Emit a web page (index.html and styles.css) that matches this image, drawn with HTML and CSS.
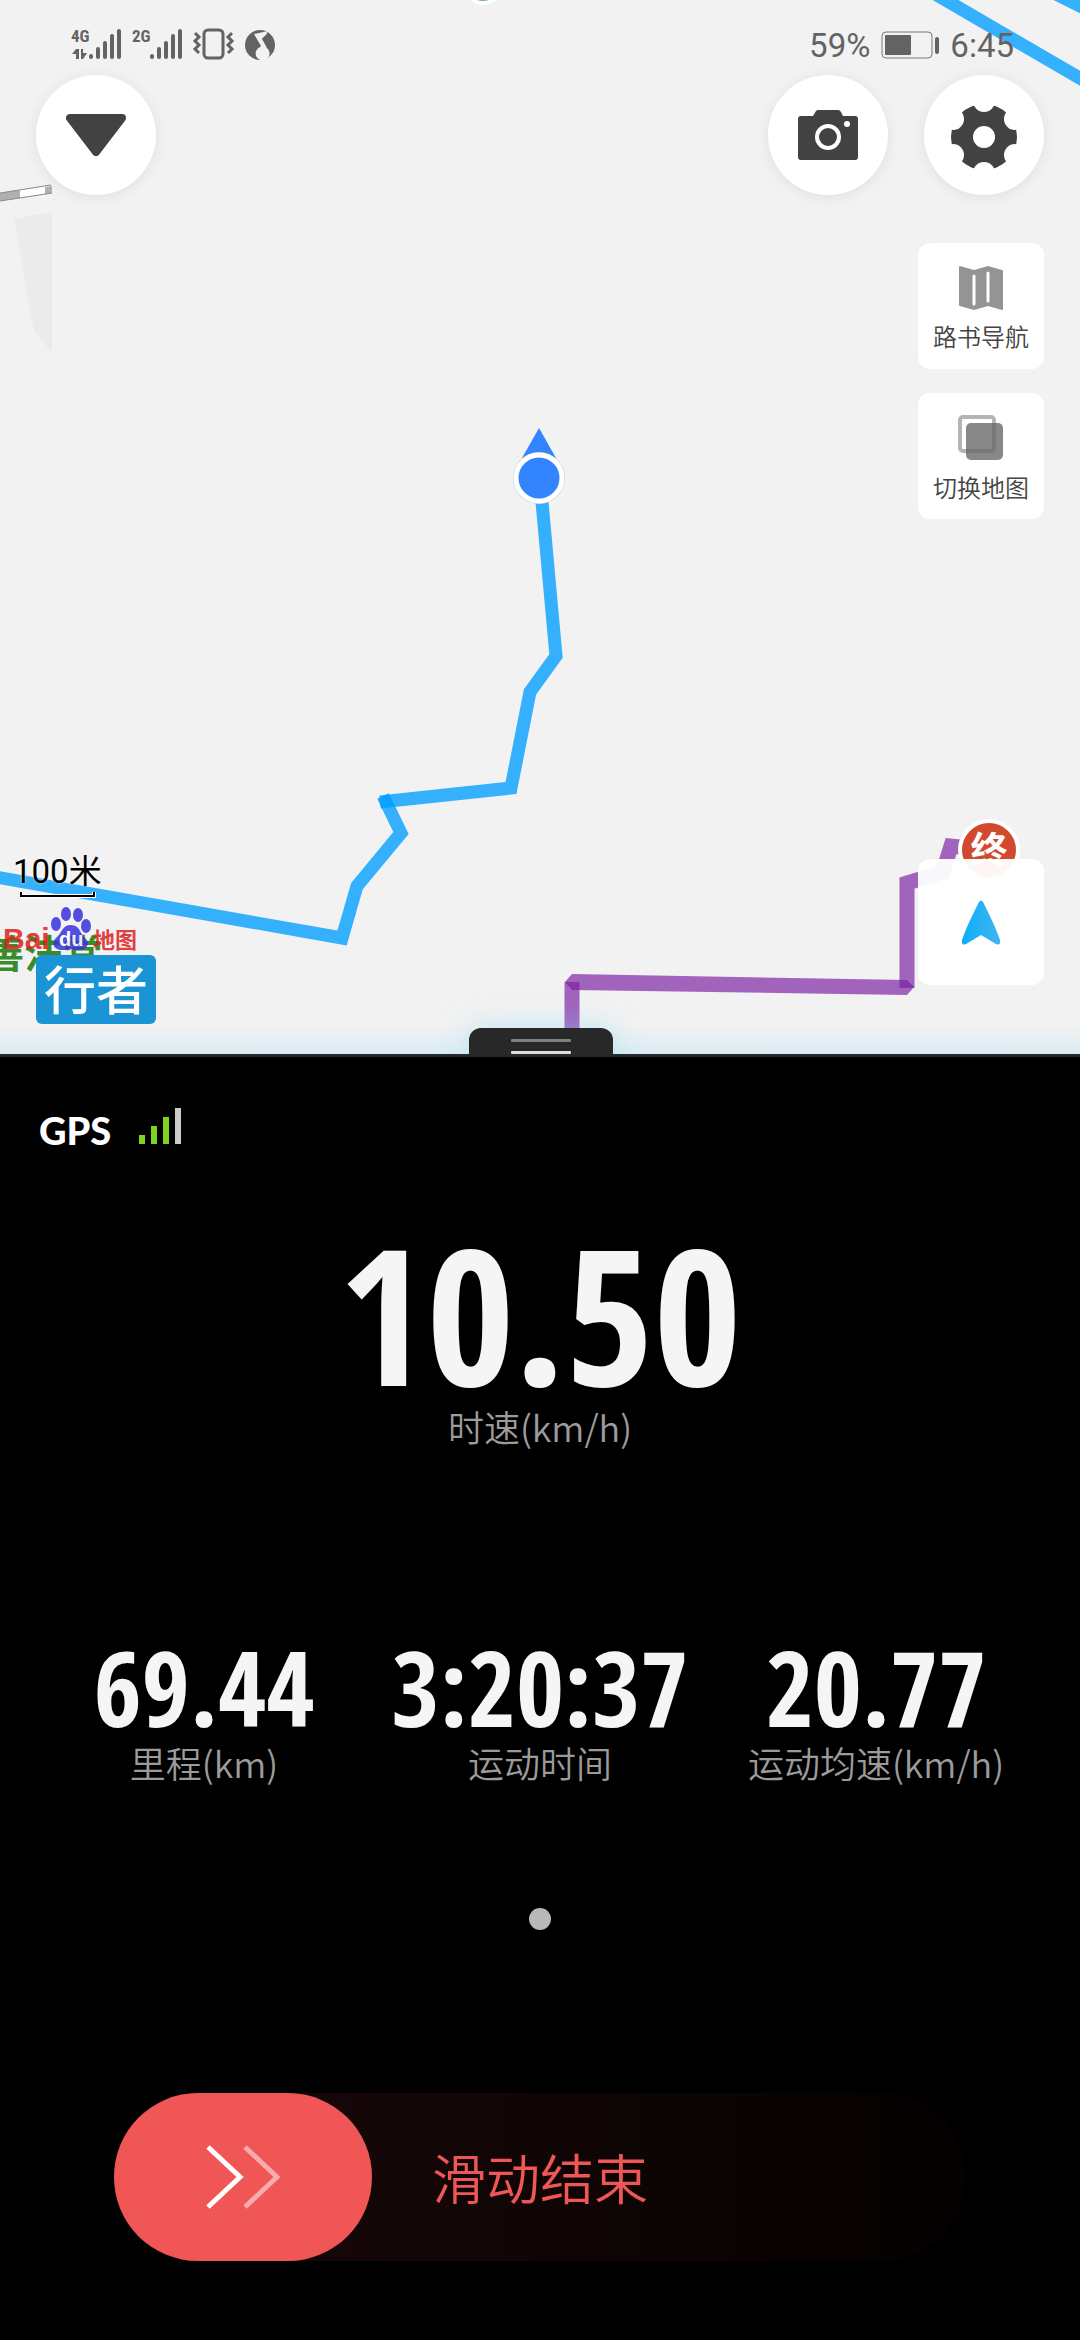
FILE: index.html
```html
<!DOCTYPE html>
<html lang="zh-CN">
<head>
<meta charset="utf-8">
<meta name="viewport" content="width=device-width, initial-scale=1">
<title>行者</title>
<link rel="stylesheet" href="styles.css">
</head>

<body>
  <section class="map">
    <svg class="tracks" width="1080" height="1056" viewBox="0 0 1080 1056">
      <!-- railway and building, cut off at the tile edge -->
      <path d="M0 193L51 185V193L0 201Z" fill="#fff"/>
      <path d="M0 193L20 190V198L0 201ZM45 187L52 186V193L45 194Z" fill="#b0b0b0"/>
      <path d="M0 193L51 185M0 201L52 193" stroke="#888" fill="none"/>
      <path d="M14 219L52 212V352L34 331Z" fill="#ebebeb"/>
      <!-- ridden track -->
      <g fill="none" stroke="#009dff" stroke-opacity=".78" stroke-width="13">
        <path d="M930 -9L1090 84M1050 -9L1090 11"/>
        <path d="M540 480L556 656L530 692L511 788L380 802"/>
        <path d="M383 796L401 833L357 886L342 938L-10 876"/>
      </g>
      <circle cx="483" cy="-15" r="18" fill="#6aa9cd" stroke="#fff" stroke-width="4"/>
      <!-- planned route -->
      <g fill="none" stroke="#7b1fa2" stroke-opacity=".68" stroke-width="15">
        <path d="M572 1056V982"/>
        <path d="M565 982L572 974L907 980L914 987L907 995L572 990Z" fill="#7b1fa2" fill-opacity=".68" stroke="none"/>
        <path d="M907 988V883L943 872L951 846L980 849"/>
      </g>
      <circle cx="989" cy="850" r="29" fill="#d24a2d" stroke="#fff" stroke-width="4"/>
      <text x="989" y="864" class="goal">终</text>
      <!-- current position -->
      <path d="M539 428L556 458H522Z" fill="#3385ff"/>
      <circle cx="539" cy="478" r="26" fill="#c9cdd2"/>
      <circle cx="539" cy="478" r="23" fill="#3385ff" stroke="#fff" stroke-width="5"/>
    </svg>

    <header class="status">
      <svg width="210" height="36" viewBox="70 26 210 36" fill="#636363">
        <text x="71" y="42" class="net">4G</text>
        <text x="132" y="42" class="net">2G</text>
        <path d="M72 54L76 49H79V59H76V54ZM81 49H83V53H87L83 59H81Z"/>
        <g stroke="#636363" stroke-width="4" stroke-linecap="round">
          <path d="M91 56V57M98 49V57M105 43V57M112 36V57M119 31V57"/>
          <path d="M152 56V57M159 49V57M166 43V57M173 36V57M180 31V57"/>
        </g>
        <rect x="204" y="30" width="19" height="28" rx="4" fill="none" stroke="#636363" stroke-width="3"/>
        <path d="M195 33L199 37L195 41L199 45L195 49L199 53M232 33L228 37L232 41L228 45L232 49L228 53" fill="none" stroke="#636363" stroke-width="3"/>
        <circle cx="260" cy="45" r="15"/>
        <path d="M254 34C259 33 263 32 268 31L266 35C264 37 262 38 262 39L267 48A7 7 0 1 1 260 47L261 46Z" fill="#f2f2f2"/>
      </svg>
      <div class="clock">
        <span>59%</span>
        <svg width="58" height="28" viewBox="0 0 58 28">
          <rect x="1" y="1" width="50" height="26" rx="4" fill="none" stroke="#777" stroke-width="1"/>
          <rect x="4" y="4" width="26" height="20" rx="1" fill="#636363"/>
          <rect x="54" y="6" width="4" height="17" rx="2" fill="#636363"/>
        </svg>
        <span>6:45</span>
      </div>
    </header>

    <nav class="topbar">
      <button class="round" aria-label="收起">
        <svg width="60" height="42" viewBox="0 0 60 42"><path d="M4 4H56L30 38Z" fill="#424242" stroke="#424242" stroke-width="8" stroke-linejoin="round"/></svg>
      </button>
      <div class="spacer"></div>
      <button class="round" aria-label="拍照">
        <svg width="60" height="50" viewBox="0 0 60 50">
          <path d="M3 6H15L18 1Q19 0 20 0H40Q42 0 43 2L45 6H57Q60 6 60 9V47Q60 50 57 50H3Q0 50 0 47V9Q0 6 3 6Z" fill="#424242"/>
          <circle cx="30" cy="27" r="11" fill="none" stroke="#fff" stroke-width="4"/>
          <circle cx="49" cy="14" r="3" fill="#fff"/>
        </svg>
      </button>
      <button class="round" aria-label="设置">
        <svg width="68" height="68" viewBox="-34 -36 68 68">
          <circle r="33" fill="#424242"/>
          <g fill="#fff">
            <circle r="11"/>
            <circle cy="-36" r="11"/><circle cy="36" r="11"/>
            <circle cx="31" cy="-18" r="11"/><circle cx="31" cy="18" r="11"/>
            <circle cx="-31" cy="-18" r="11"/><circle cx="-31" cy="18" r="11"/>
          </g>
        </svg>
      </button>
    </nav>

    <div class="tools">
      <button class="tool">
        <svg width="44" height="44" viewBox="0 0 44 44">
          <path d="M0 1Q0 0 1 0L15 4L29 0L43 4Q44 4 44 5V43Q44 44 43 44L29 40L15 44L1 40Q0 40 0 39Z" fill="#949494"/>
          <path d="M15 10V38M29 7V35" stroke="#fff" stroke-width="3" stroke-linecap="round"/>
        </svg>
        路书导航
      </button>
      <button class="tool">
        <svg width="46" height="46" viewBox="0 0 46 46">
          <rect x="2" y="2" width="34" height="34" rx="3" fill="none" stroke="#b4b4b4" stroke-width="4"/>
          <rect x="8" y="8" width="37" height="37" rx="5" fill="#666" fill-opacity=".78"/>
        </svg>
        切换地图
      </button>
    </div>

    <div class="corner">
      <div class="scale">100米</div>
      <svg class="ruler" width="76" height="6" viewBox="0 0 76 6"><path d="M1 0V4H74V0" fill="none" stroke="#fff" stroke-width="4"/><path d="M1 0V4H74V0" fill="none" stroke="#000" stroke-width="2"/></svg>
      <svg class="baidu" width="150" height="66" viewBox="0 0 150 66">
        <text x="-15" y="62" class="place">善法堂</text>
        <g opacity=".85">
          <text x="3" y="43" class="bai">Bai</text>
          <g fill="#3a31dd">
            <ellipse cx="56" cy="18" rx="5" ry="7"/><ellipse cx="66" cy="8" rx="5" ry="7"/>
            <ellipse cx="78" cy="9" rx="5" ry="7"/><ellipse cx="86" cy="20" rx="5" ry="7"/>
            <path d="M71 19C80 19 80 28 85 32C92 38 85 45 78 44C72 43 69 43 64 44C54 45 50 37 57 31C62 27 62 19 71 19Z"/>
          </g>
          <text x="59" y="40" class="du">du</text>
          <text x="93" y="42" class="ditu">地图</text>
        </g>
      </svg>
      <div class="brand">行者</div>
    </div>

    <button class="locate" aria-label="定位">
      <svg width="40" height="45" viewBox="0 0 40 45">
        <defs><linearGradient id="arrow"><stop offset="0" stop-color="#10aefb"/><stop offset="1" stop-color="#3eb4f0"/></linearGradient></defs>
        <path d="M18 2Q20 -1 22 2C28 14 35 28 39 40Q40 46 35 44L20 35L5 44Q0 46 1 40C5 28 12 14 18 2Z" fill="url(#arrow)"/>
      </svg>
    </button>
    <div class="glow"></div>
    <button class="handle" aria-label="展开"><span></span><span></span></button>
  </section>

  <main class="panel">
    <div class="gps">
      GPS
      <svg width="42" height="36" viewBox="0 0 42 36" fill="#7ed321">
        <path d="M0 27h6v9H0zM12 18h6v18h-6zM24 9h6v27h-6z"/>
        <path d="M36 0h6v36h-6z" fill="#ccc"/>
      </svg>
    </div>

    <div class="speed">
      <div class="value">10.50</div>
      <div class="label">时速(km/h)</div>
    </div>

    <div class="stats">
      <div class="stat"><div class="value">69.44</div><div class="label">里程(km)</div></div>
      <div class="stat"><div class="value">3:20:37</div><div class="label">运动时间</div></div>
      <div class="stat"><div class="value">20.77</div><div class="label">运动均速(km/h)</div></div>
    </div>

    <div class="dot"></div>

    <div class="slide">
      <button class="knob" aria-label="滑动结束">
        <svg width="74" height="64" viewBox="0 0 74 64" fill="none" stroke="#fff" stroke-width="5">
          <path d="M2 2L34 32L2 62"/>
          <path d="M39 2L71 32L39 62" opacity=".5"/>
        </svg>
      </button>
      <span>滑动结束</span>
    </div>
  </main>
</body>
</html>
```
FILE: styles.css
```css
* { box-sizing: border-box; }
body { margin: 0; background: #000; min-height: 100vh; display: flex; flex-direction: column;
       font-family: Roboto, "Noto Sans CJK SC", sans-serif; }
button { border: 0; padding: 0; font: inherit; cursor: pointer; }
svg { display: block; }

/* map */
.map { position: relative; height: 1057px; overflow: hidden; background: #f2f2f2;
       border-bottom: 3px solid #26292b; }
.tracks { position: absolute; top: 0; left: 0; }
.goal { font: bold 37px "Noto Sans CJK SC", sans-serif; fill: #fff; text-anchor: middle; }

.status { position: relative; display: flex; justify-content: space-between;
          height: 75px; padding: 26px 66px 0 70px; }
.net { font: bold 17px "Roboto Condensed", Roboto, sans-serif; }
.clock { display: flex; align-items: center; gap: 11px; height: 38px;
         color: #636363; font-size: 33px; }

.topbar { position: relative; display: flex; gap: 36px; padding: 0 36px; }
.spacer { flex: 1; }
.round { width: 120px; height: 120px; border-radius: 50%; background: #fff;
         display: flex; align-items: center; justify-content: center;
         box-shadow: 0 2px 14px rgba(0,0,0,.08); }

.tools { position: relative; display: flex; flex-direction: column; align-items: flex-end;
         gap: 24px; padding: 48px 36px 0; }
.tool { width: 126px; height: 126px; border-radius: 12px; background: #fff; color: #444;
        display: flex; flex-direction: column; align-items: center; justify-content: center;
        gap: 8px; padding-top: 8px; font: 350 24px/36px "Noto Sans CJK SC", sans-serif; }

.corner { position: absolute; left: 0; bottom: 30px; width: 160px; }
.scale { padding-left: 13px; color: #000; font: 400 33px/40px Roboto, "Noto Sans CJK SC", sans-serif;
         text-shadow: 0 0 2px #fff; }
.ruler { margin: 0 0 8px 20px; }
.baidu { margin-bottom: -17px; overflow: visible; }
.place { font: bold 39px "Noto Sans CJK SC", sans-serif; fill: #3a8b2c; }
.bai { font: bold 30px "Liberation Sans", sans-serif; fill: #e02020; }
.du { font: bold 20px "Liberation Sans", sans-serif; fill: #fff; }
.ditu { font: bold 22px "Noto Sans CJK SC", sans-serif; fill: #e02020; }
.brand { position: relative; margin-left: 36px; width: 120px; height: 69px; border-radius: 6px;
         background: #1a94d4; color: #fff; text-align: center;
         font: 500 52px/66px "Noto Sans CJK SC", sans-serif; }

.locate { position: absolute; right: 36px; bottom: 69px; width: 126px; height: 126px;
          border-radius: 12px; background: rgba(255,255,255,.95);
          display: flex; align-items: center; justify-content: center; }
.glow { position: absolute; left: 0; right: 0; bottom: 0; height: 28px;
        background: linear-gradient(rgba(200,232,245,0), rgba(200,232,245,.6)); }
.handle { position: absolute; left: 50%; bottom: 0; width: 144px; height: 26px; margin-left: -71px;
          border-radius: 12px 12px 0 0; background: #282828;
          display: flex; flex-direction: column; align-items: center; justify-content: flex-end;
          gap: 9px; box-shadow: 0 0 30px rgba(130,215,245,.5); }
.handle span { width: 60px; height: 3px; border-radius: 1px; background: #808080; }
.handle span + span { background: #ddd; }

/* data panel */
.panel { flex: 1; background: #000; color: #f5f5f5; }
.gps { display: flex; align-items: flex-end; gap: 28px; padding: 51px 39px 0;
       font: 900 38px/28px Lato, sans-serif; color: #fff; }
.value { font-family: "Open Sans Condensed", "Noto Sans ExtraCondensed", "Noto Sans Condensed", "Roboto Condensed", Roboto, sans-serif;
         font-weight: bold; }
.label { color: #9b9b9b; font: 350 36px/36px "Noto Sans CJK SC", sans-serif; }
.speed { margin-top: 74px; text-align: center; }
.speed .value { font-size: 190px; line-height: 190px; }
.stats { display: grid; grid-template-columns: 1fr 1fr 1fr; padding: 0 36px; margin-top: 186px;
         text-align: center; }
.stats .value { font-size: 104px; line-height: 114px; }
.dot { width: 22px; height: 22px; margin: 128px auto 0; border-radius: 50%; background: #b8b8b8; }

.slide { display: flex; align-items: center; gap: 60px; height: 168px; margin: 163px 114px 0;
         border-radius: 84px; background: linear-gradient(90deg, #1b0909, #050101);
         color: #ef5656; font: 350 54px/80px "Noto Sans CJK SC", sans-serif; }
.knob { width: 258px; height: 168px; border-radius: 84px; background: #f05656;
        display: flex; align-items: center; justify-content: center; }
```
